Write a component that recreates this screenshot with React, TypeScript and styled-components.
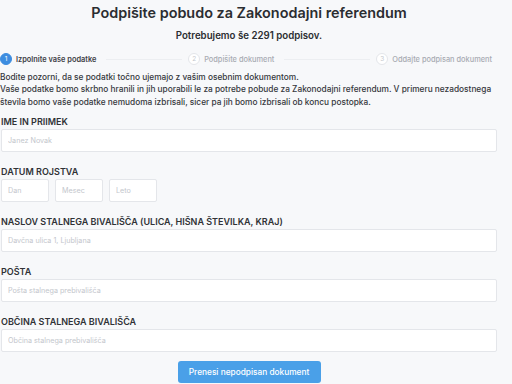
import styled, { createGlobalStyle } from "styled-components";

const GlobalStyle = createGlobalStyle`
  html, body {
    margin: 0;
    padding: 0;
    background: #f7f8fa;
    font-family: Inter, "Noto Sans", sans-serif;
    color: #303133;
  }
  * { box-sizing: border-box; }
`;

const Page = styled.main`
  width: 498px;
  padding: 0 1px;
  display: flex;
  flex-direction: column;
`;

const Title = styled.h1`
  margin: 3px 0 0;
  font-size: 14.4px;
  line-height: 20px;
  font-weight: 600;
  text-align: center;
  color: #2b2d31;
`;

const Subtitle = styled.h2`
  margin: 6px 0 0;
  font-size: 9.7px;
  line-height: 14px;
  font-weight: 600;
  text-align: center;
  color: #2b2d31;
`;

const Steps = styled.ol`
  list-style: none;
  margin: 9.5px 5px 0 -1px;
  padding: 0;
  display: flex;
  align-items: center;
  height: 13px;
`;

const Step = styled.li<{ $last?: boolean }>`
  display: flex;
  align-items: center;
  flex: ${(p) => (p.$last ? "0 0 auto" : "1 1 0")};
  gap: 4px;
`;

const Circle = styled.span<{ $active?: boolean }>`
  width: 12px;
  height: 12px;
  border-radius: 50%;
  flex: none;
  display: flex;
  align-items: center;
  justify-content: center;
  font-size: 6.5px;
  background: ${(p) => (p.$active ? "#3d8de0" : "#fff")};
  border: 1px solid ${(p) => (p.$active ? "#3d8de0" : "#e4e6ea")};
  color: ${(p) => (p.$active ? "#fff" : "#c4c7cc")};
`;

const StepLabel = styled.span<{ $active?: boolean }>`
  font-size: 7.4px;
  font-weight: ${(p) => (p.$active ? 600 : 500)};
  white-space: nowrap;
  color: ${(p) => (p.$active ? "#3f4247" : "#a8abb2")};
`;

const Line = styled.span`
  flex: 1;
  height: 1px;
  background: #eceef1;
  margin: 0 6px 0 6px;
`;

const Notice = styled.p`
  margin: 5px 0 0 -1px;
  font-size: 8.3px;
  line-height: 12.5px;
  font-weight: 500;
  color: #35373c;
`;

const Form = styled.form`
  display: flex;
  flex-direction: column;
  gap: 14px;
  margin-top: 8px;
`;

const Field = styled.div`
  display: flex;
  flex-direction: column;
  gap: 2px;
`;

const Label = styled.label`
  font-size: 9px;
  line-height: 11px;
  font-weight: 600;
  color: #303236;
  text-transform: uppercase;
`;

const Input = styled.input<{ $width?: string }>`
  width: ${(p) => p.$width ?? "100%"};
  height: 23px;
  margin: 0;
  padding: 0 6px;
  border: 1px solid #e4e6ea;
  border-radius: 2px;
  background: #fff;
  font-family: inherit;
  font-size: 7.2px;
  color: #303133;
  outline: none;

  &::placeholder {
    color: #c3c6cc;
  }
`;

const DateRow = styled.div`
  display: flex;
  gap: 6px;
`;

const Actions = styled.div`
  display: flex;
  justify-content: center;
  margin-top: -5px;
`;

const Button = styled.button`
  width: 143px;
  height: 22px;
  border: 0;
  border-radius: 3px;
  background: #4aa0e8;
  color: #fff;
  font-family: inherit;
  font-size: 8.3px;
  font-weight: 500;
  cursor: pointer;
`;

const steps = [
  { n: 1, label: "Izpolnite vaše podatke" },
  { n: 2, label: "Podpišite dokument" },
  { n: 3, label: "Oddajte podpisan dokument" },
];

export default function App() {
  return (
    <>
      <GlobalStyle />
      <Page>
        <Title>Podpišite pobudo za Zakonodajni referendum</Title>
        <Subtitle>Potrebujemo še 2291 podpisov.</Subtitle>
        <Steps>
          {steps.map((s, i) => (
            <Step key={s.n} $last={i === steps.length - 1}>
              <Circle $active={i === 0}>{s.n}</Circle>
              <StepLabel $active={i === 0}>{s.label}</StepLabel>
              {i < steps.length - 1 && <Line />}
            </Step>
          ))}
        </Steps>
        <Notice>
          Bodite pozorni, da se podatki točno ujemajo z vašim osebnim dokumentom.
          <br />
          Vaše podatke bomo skrbno hranili in jih uporabili le za potrebe pobude za
          Zakonodajni referendum. V primeru nezadostnega števila bomo vaše podatke
          nemudoma izbrisali, sicer pa jih bomo izbrisali ob koncu postopka.
        </Notice>
        <Form onSubmit={(e) => e.preventDefault()}>
          <Field>
            <Label>Ime in priimek</Label>
            <Input placeholder="Janez Novak" />
          </Field>
          <Field>
            <Label>Datum rojstva</Label>
            <DateRow>
              <Input $width="48px" placeholder="Dan" />
              <Input $width="48px" placeholder="Mesec" />
              <Input $width="48px" placeholder="Leto" />
            </DateRow>
          </Field>
          <Field>
            <Label>Naslov stalnega bivališča (ulica, hišna številka, kraj)</Label>
            <Input placeholder="Davčna ulica 1, Ljubljana" />
          </Field>
          <Field>
            <Label>Pošta</Label>
            <Input placeholder="Pošta stalnega prebivališča" />
          </Field>
          <Field>
            <Label>Občina stalnega bivališča</Label>
            <Input placeholder="Občina stalnega prebivališča" />
          </Field>
          <Actions>
            <Button type="submit">Prenesi nepodpisan dokument</Button>
          </Actions>
        </Form>
      </Page>
    </>
  );
}
